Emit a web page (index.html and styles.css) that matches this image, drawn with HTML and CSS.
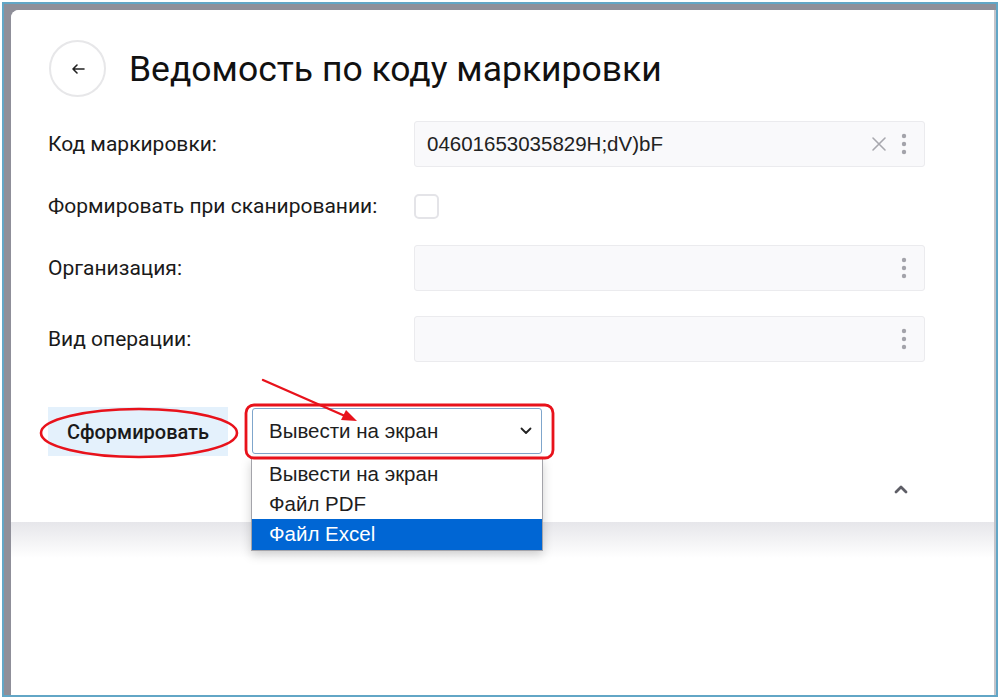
FILE: index.html
```html
<!DOCTYPE html>
<html lang="ru">
<head>
<meta charset="utf-8">
<title>Ведомость по коду маркировки</title>
<link rel="stylesheet" href="styles.css">
</head>
<body>
<div class="frame">
  <div class="window">
    <div class="page">
      <div class="card">
        <div class="header">
          <button class="back" type="button" aria-label="Назад">
            <svg width="16" height="12" viewBox="0 0 16 12"><path d="M14 6H3M7 2L3 6l4 4" fill="none" stroke="#222" stroke-width="1.6" stroke-linecap="round" stroke-linejoin="round"/></svg>
          </button>
          <h1 class="title">Ведомость по коду маркировки</h1>
        </div>

        <div class="form">
          <div class="row">
            <div class="label">Код маркировки:</div>
            <div class="field">
              <span class="value">04601653035829H;dV)bF</span>
              <span class="icons">
                <svg class="clear" width="16" height="16" viewBox="0 0 16 16"><path d="M2 2l12 12M14 2L2 14" stroke="#a8a8ae" stroke-width="1.6" stroke-linecap="round"/></svg>
                <svg class="dots" width="6" height="22" viewBox="0 0 6 22"><circle cx="3" cy="3" r="2.2" fill="#a3a3aa"/><circle cx="3" cy="11" r="2.2" fill="#a3a3aa"/><circle cx="3" cy="19" r="2.2" fill="#a3a3aa"/></svg>
              </span>
            </div>
          </div>
          <div class="row">
            <div class="label">Формировать при сканировании:</div>
            <div class="check-wrap"><span class="checkbox"></span></div>
          </div>
          <div class="row">
            <div class="label">Организация:</div>
            <div class="field">
              <span class="value"></span>
              <span class="icons">
                <svg class="dots" width="6" height="22" viewBox="0 0 6 22"><circle cx="3" cy="3" r="2.2" fill="#a3a3aa"/><circle cx="3" cy="11" r="2.2" fill="#a3a3aa"/><circle cx="3" cy="19" r="2.2" fill="#a3a3aa"/></svg>
              </span>
            </div>
          </div>
          <div class="row row-last">
            <div class="label">Вид операции:</div>
            <div class="field">
              <span class="value"></span>
              <span class="icons">
                <svg class="dots" width="6" height="22" viewBox="0 0 6 22"><circle cx="3" cy="3" r="2.2" fill="#a3a3aa"/><circle cx="3" cy="11" r="2.2" fill="#a3a3aa"/><circle cx="3" cy="19" r="2.2" fill="#a3a3aa"/></svg>
              </span>
            </div>
          </div>
        </div>

        <div class="actions">
          <button class="primary" type="button">Сформировать</button>
          <div class="select-wrap">
            <div class="select">
              <span>Вывести на экран</span>
              <svg width="12" height="8" viewBox="0 0 12 8"><path d="M1.5 1.5L6 6l4.5-4.5" fill="none" stroke="#222" stroke-width="1.8" stroke-linecap="round" stroke-linejoin="round"/></svg>
            </div>
            <ul class="dropdown">
              <li>Вывести на экран</li>
              <li>Файл PDF</li>
              <li class="active">Файл Excel</li>
            </ul>
          </div>
        </div>

        <div class="footer">
          <svg width="14" height="9" viewBox="0 0 14 9"><path d="M2 7l5-5 5 5" fill="none" stroke="#5e5e66" stroke-width="2.8" stroke-linecap="round" stroke-linejoin="round"/></svg>
        </div>
      </div>
      <div class="below"></div>
    </div>
  </div>
</div>

<svg class="annotations" width="1000" height="700" viewBox="0 0 1000 700">
  <ellipse cx="139" cy="433" rx="98" ry="24" fill="none" stroke="#e8121b" stroke-width="2.6"/>
  <rect x="246" y="405" width="307" height="53" rx="8" fill="none" stroke="#e8121b" stroke-width="2.8"/>
  <line x1="263" y1="380" x2="345" y2="416" stroke="#e8121b" stroke-width="2.4" stroke-linecap="round"/>
  <path d="M357 421L341 420L346 410Z" fill="#e8121b"/>
</svg>
</body>
</html>
```

FILE: styles.css
```css
* { box-sizing: border-box; }

html, body {
  margin: 0;
  padding: 0;
  background: #ffffff;
}

body {
  font-family: Roboto, "Noto Sans", Arial, sans-serif;
  color: #1a1a1a;
  width: 1000px;
  height: 700px;
  overflow: hidden;
  position: relative;
}

.frame {
  position: absolute;
  left: 2px;
  top: 2px;
  width: 996px;
  height: 695px;
  border: 2px solid #62a6c6;
  background: #ffffff;
}

.window {
  height: 100%;
  background: #8f8f99;
  padding: 6px 0 0 7px;
}

.page {
  height: 100%;
  background: #ffffff;
  border-top-left-radius: 8px;
  border-right: 2px solid #c4c4ca;
  display: flex;
  flex-direction: column;
}

.card {
  background: #ffffff;
  padding: 30px 0 20px 37px;
  height: 512px;
  flex: none;
  border-top-left-radius: 8px;
}

.below {
  height: 36px;
  background: linear-gradient(#e6e6ea, #ffffff);
}

.header {
  display: flex;
  align-items: center;
  gap: 23px;
  height: 57px;
  margin-bottom: 24px;
}

.back {
  width: 57px;
  height: 57px;
  border-radius: 50%;
  border: 2px solid #e7e7e9;
  background: #ffffff;
  display: flex;
  align-items: center;
  justify-content: center;
  padding: 0;
  margin-left: 1px;
}

.title {
  margin: 0;
  font-size: 35.5px;
  font-weight: 400;
  color: #111111;
}

.form {
  display: flex;
  flex-direction: column;
  gap: 16px;
}

.row {
  display: flex;
  align-items: center;
  height: 46px;
}

.row-last { margin-top: 9px; }

.label {
  width: 366px;
  flex: none;
  font-size: 21px;
  color: #1a1a1a;
}

.field {
  width: 511px;
  height: 46px;
  background: #f9f9fb;
  border: 1px solid #ebebee;
  border-radius: 3px;
  display: flex;
  align-items: center;
  justify-content: space-between;
  padding: 0 17px 0 12px;
}

.value {
  font-family: "Liberation Sans", Arial, sans-serif;
  font-size: 20.5px;
  color: #222222;
}

.icons {
  display: flex;
  align-items: center;
  gap: 14px;
}

.check-wrap {
  display: flex;
  align-items: center;
}

.checkbox {
  width: 25px;
  height: 25px;
  border: 2px solid #e4e4e8;
  border-radius: 5px;
  background: #ffffff;
}

.actions {
  display: flex;
  align-items: flex-start;
  gap: 24px;
  margin-top: 45px;
}

.primary {
  width: 180px;
  height: 49px;
  border: none;
  background: #e4f1fc;
  font-family: Roboto, Arial, sans-serif;
  font-size: 20px;
  font-weight: 500;
  color: #1a1a1a;
  padding: 0;
}

.select-wrap {
  position: relative;
  margin-top: 1px;
}

.select {
  width: 290px;
  height: 46px;
  border: 1px solid #7fa6cc;
  border-radius: 3px;
  background: #ffffff;
  display: flex;
  align-items: center;
  justify-content: space-between;
  padding: 0 9px 0 16px;
  font-family: "Liberation Sans", Arial, sans-serif;
  font-size: 20.5px;
  color: #1e1e1e;
}

.dropdown {
  position: absolute;
  left: -1px;
  top: 50px;
  width: 292px;
  margin: 0;
  padding: 0;
  list-style: none;
  background: #ffffff;
  border: 1px solid #a4a4aa;
  box-shadow: 0 4px 10px rgba(0, 0, 0, 0.18);
  font-family: "Liberation Sans", Arial, sans-serif;
  font-size: 20.5px;
  color: #1e1e1e;
}

.dropdown li {
  height: 30px;
  line-height: 30px;
  padding-left: 17px;
}

.dropdown li.active {
  background: #0066d4;
  color: #ffffff;
  height: 31px;
}

.footer {
  display: flex;
  justify-content: flex-end;
  align-items: center;
  height: 24px;
  margin-top: 21px;
  padding-right: 86px;
}

.annotations {
  position: absolute;
  left: 0;
  top: 0;
  pointer-events: none;
}
```
